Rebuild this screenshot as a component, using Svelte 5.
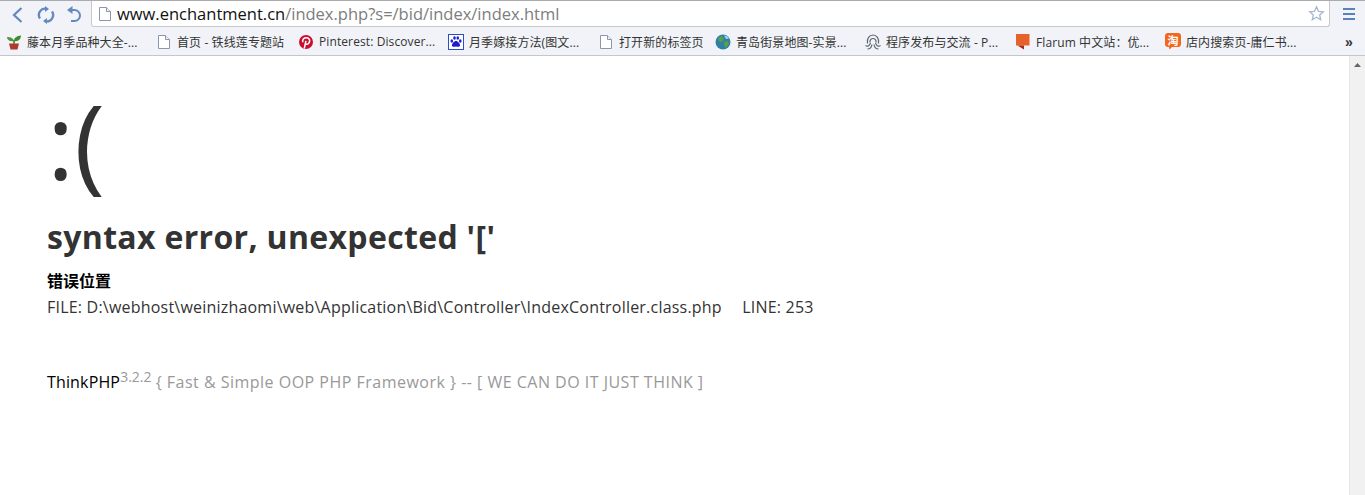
<script lang="ts">
  /**
   * Browser window showing a ThinkPHP error page.
   */
  const bookmarks = [
    { icon: 'plant', label: '藤本月季品种大全-...', width: 151 },
    { icon: 'page', label: '首页 - 铁线莲专题站', width: 141 },
    { icon: 'pinterest', label: 'Pinterest: Discover...', width: 150 },
    { icon: 'paw', label: '月季嫁接方法(图文...', width: 151 },
    { icon: 'page', label: '打开新的标签页', width: 116 },
    { icon: 'globe', label: '青岛街景地图-实景...', width: 150 },
    { icon: 'octo', label: '程序发布与交流 - P...', width: 150 },
    { icon: 'flarum', label: 'Flarum 中文站：优...', width: 150 },
    { icon: 'tao', label: '店内搜索页-庸仁书...', width: 150 }
  ];
</script>

{#snippet pageIcon()}
  <svg width="15" height="16" viewBox="1 0 15 16">
    <path d="M2.500 1.500h7l4 4v9h-11z" fill="#fff" stroke="#8a97ad" />
    <path d="M9.500 1.500v4h4" fill="#eef0f5" stroke="#8a97ad" />
  </svg>
{/snippet}

<div class="window">
  <div class="chrome">
    <div class="toolbar">
      <button class="nav back" aria-label="Back">
        <svg width="16" height="20" viewBox="0 0 16 20">
          <path d="M12.500 3 5 10l7.500 7" fill="none" stroke="#6389be" stroke-width="2.200" />
        </svg>
      </button>
      <button class="nav reload" aria-label="Reload">
        <svg width="18" height="18" viewBox="0 0 18 18">
          <path d="M3 12.500A6.300 6.300 0 0 1 9.500 2.800" fill="none" stroke="#6389be" stroke-width="2.300" />
          <path d="M15 5.500A6.300 6.300 0 0 1 8.500 15.200" fill="none" stroke="#6389be" stroke-width="2.300" />
          <path d="M8 0v6l4-3zM10 12v6l-4-3z" fill="#6389be" />
        </svg>
      </button>
      <button class="nav undo" aria-label="Undo">
        <svg width="16" height="18" viewBox="0 0 16 18">
          <path d="M4 4h4.500a5 5 0 0 1 0 11H5" fill="none" stroke="#6389be" stroke-width="2" />
          <path d="M6.500 0v8L1 4z" fill="#6389be" />
        </svg>
      </button>
      <div class="omnibox">
        <span class="page-icon">{@render pageIcon()}</span>
        <span class="url"><span class="host">www.enchantment.cn</span>/index.php?s=/bid/index/index.html</span>
        <svg class="star" width="17" height="17" viewBox="0 0 17 17">
          <path d="M8.500 1.800l2 4.500 4.800.5-3.600 3.200 1 4.800-4.200-2.500-4.200 2.500 1-4.800L1.700 6.800l4.800-.5z" fill="none" stroke="#a6b7d0" stroke-width="1.300" />
        </svg>
      </div>
      <button class="menu" aria-label="Menu">
        <span></span><span></span><span></span>
      </button>
    </div>

    <div class="bookmarks">
      {#each bookmarks as b}
        <div class="bookmark" style="width: {b.width}px">
          <span class="bm-icon">
            {#if b.icon === 'page'}
              {@render pageIcon()}
            {:else if b.icon === 'plant'}
              <svg width="16" height="16" viewBox="0 0 16 16">
                <path d="M8 10V6" stroke="#3c7a2a" stroke-width="1.500" />
                <path d="M8 7C7 3.500 4 3 1 3c0 3 3 5 7 4z" fill="#4f9a35" />
                <path d="M8 7c0-3.500 3-5 7-5.500C15 5 12 8 8 7z" fill="#3f8a2d" />
                <path d="M3 9.500h10l-1.500 6h-7z" fill="#b03a2e" />
              </svg>
            {:else if b.icon === 'pinterest'}
              <svg width="16" height="16" viewBox="0 0 16 16">
                <circle cx="8" cy="8" r="7" fill="#c8102e" />
                <path d="M6.300 14.500 7.900 6.800M5 8.200C3.800 5.500 6 3.700 8.300 3.700c2.300 0 3.500 1.500 3.300 3.400-.2 2-1.700 3.300-3 3.100-.9-.1-1.300-.7-1.400-1.200" fill="none" stroke="#fff" stroke-width="1.500" />
              </svg>
            {:else if b.icon === 'paw'}
              <svg width="16" height="16" viewBox="0 0 16 16">
                <rect x="0.500" y="0.500" width="15" height="15" fill="#fff" stroke="#2a4fc4" />
                <g fill="#1d1ad0">
                  <ellipse cx="3.800" cy="7" rx="1.300" ry="1.800" />
                  <ellipse cx="6.500" cy="4" rx="1.300" ry="1.800" />
                  <ellipse cx="9.800" cy="4" rx="1.300" ry="1.800" />
                  <ellipse cx="12.300" cy="7" rx="1.300" ry="1.800" />
                  <path d="M8 7c-2 0-4 2.500-4 4.300C4 13 6 13 8 12.400c2 .6 4 .6 4-1.100C12 9.500 10 7 8 7z" />
                </g>
              </svg>
            {:else if b.icon === 'globe'}
              <svg width="16" height="16" viewBox="0 0 16 16">
                <circle cx="8" cy="8" r="7.500" fill="#2f7fa8" />
                <path d="M4 3l3-1 2 2-1 3-3 1-2-2zM9 8l4-1 1 3-3 4-2-3z" fill="#55a04a" />
                <path d="M9 1.500c2 0 4 1 5 3l-3 .5z" fill="#a7d3e6" />
              </svg>
            {:else if b.icon === 'octo'}
              <svg width="16" height="16" viewBox="0 0 16 16" fill="none" stroke="#5c6670" stroke-width="1.200">
                <path d="M2.500 9.500C1.500 4.500 4.500 1 8 1s6.500 3.500 5.500 8.500" />
                <path d="M5 8.500C4.500 6 6.300 4.500 8 4.500S11.500 6 11 8.500" />
                <path d="M.5 11.500c2 1.500 4 .5 5-2.500M2.500 15c2.500 0 4-1.500 4.500-4.500M15.500 11.500c-2 1.500-4 .5-5-2.500M13.500 15c-2.500 0-4-1.500-4.500-4.500" />
              </svg>
            {:else if b.icon === 'flarum'}
              <svg width="16" height="16" viewBox="0 0 16 16">
                <path d="M1 0h13.500v11.500H1z" fill="#e7622a" />
                <path d="M2.500 11.500h6.500v4z" fill="#a8261c" />
              </svg>
            {:else}
              <svg width="16" height="17" viewBox="0 0 16 17">
                <path d="M3 0h10a3 3 0 0 1 3 3v8a3 3 0 0 1-3 3H7l-2.500 2.500L4 14H3a3 3 0 0 1-3-3V3a3 3 0 0 1 3-3z" fill="#f2661d" />
                <text x="8" y="11.500" text-anchor="middle" font-size="11" font-weight="bold" fill="#fff" font-family="Noto Sans CJK SC">淘</text>
              </svg>
            {/if}
          </span>
          <span class="bm-label">{b.label}</span>
        </div>
      {/each}
      <span class="more">»</span>
    </div>
  </div>

  <div class="viewport">
    <main class="error">
      <p class="face">:(</p>
      <h1>syntax error, unexpected '['</h1>
      <div class="content">
        <h3>错误位置</h3>
        <p class="line">FILE: D:\webhost\weinizhaomi\web\Application\Bid\Controller\IndexController.class.php <span class="line-no">LINE: 253</span></p>
      </div>
      <p class="copyright">
        <a href="#top">ThinkPHP</a><sup>3.2.2</sup> <span class="slogan">{'{'} Fast &amp; Simple OOP PHP Framework {'}'} -- [ WE CAN DO IT JUST THINK ]</span>
      </p>
    </main>
    <div class="scrollbar">
      <svg width="7" height="4" viewBox="0 0 7 4">
        <path d="M3.500 0 7 4H0z" fill="#666" />
      </svg>
    </div>
  </div>
</div>

<style>
  :global(body) {
    margin: 0;
    background: #fff;
  }

  .window {
    width: 1365px;
    height: 495px;
    display: flex;
    flex-direction: column;
    overflow: hidden;
    font-family: "Open Sans", "Noto Sans CJK SC", sans-serif;
  }

  .chrome {
    background: #f1f3f8;
    border-top: 1px solid #a9abaf;
    border-bottom: 1px solid #c3c6cd;
    flex: none;
  }

  .toolbar {
    height: 27px;
    display: flex;
    align-items: flex-start;
    padding-left: 8px;
  }

  .nav {
    height: 27px;
    padding: 0;
    border: none;
    background: none;
    display: flex;
    align-items: center;
    justify-content: center;
  }

  .back {
    width: 17px;
    margin-right: 10px;
  }

  .reload {
    width: 21px;
    margin-right: 9px;
  }

  .undo {
    width: 17px;
    margin-right: 9px;
  }

  .omnibox {
    width: 1239px;
    height: 26px;
    box-sizing: border-box;
    background: #fff;
    border: 1px solid #c6c8cc;
    border-top: none;
    border-radius: 0 0 3px 3px;
    display: flex;
    align-items: center;
    padding: 0 4px 0 6px;
  }

  .page-icon {
    display: flex;
    margin-right: 4px;
  }

  .url {
    flex: 1;
    font-family: "Open Sans", sans-serif;
    font-size: 16.5px;
    color: #7d7d7d;
    white-space: nowrap;
  }

  .host {
    color: #111;
  }

  .menu {
    width: 12px;
    height: 12px;
    margin: 7px 0 0 13px;
    padding: 0;
    border: none;
    background: none;
    display: flex;
    flex-direction: column;
    justify-content: space-between;
  }

  .menu span {
    display: block;
    height: 2px;
    width: 12px;
    background: #5b82b8;
  }

  .bookmarks {
    height: 27px;
    display: flex;
    align-items: center;
    padding-left: 6px;
  }

  .bookmark {
    display: flex;
    align-items: center;
    gap: 5px;
    flex: none;
    white-space: nowrap;
    overflow: hidden;
  }

  .bm-icon {
    display: flex;
    flex: none;
  }

  .bm-label {
    font-family: "Open Sans", "Noto Sans CJK SC", sans-serif;
    font-size: 12px;
    letter-spacing: 0.1px;
    color: #333;
  }

  .more {
    margin-left: 30px;
    font-family: "Liberation Sans", sans-serif;
    font-size: 14px;
    font-weight: bold;
    color: #333;
  }

  .viewport {
    flex: 1;
    display: flex;
    min-height: 0;
  }

  .error {
    flex: 1;
    padding: 24px 48px 0 47px;
    color: #333;
    font-size: 16px;
  }

  .face {
    margin: 0 0 13px;
    font-size: 104px;
    font-weight: normal;
    line-height: 120px;
  }

  h1 {
    margin: 0;
    font-size: 32px;
    font-weight: bold;
    line-height: 48px;
    letter-spacing: 0.33px;
  }

  .content {
    padding-top: 7px;
  }

  h3 {
    margin: 0;
    font-family: "Noto Sans CJK SC", sans-serif;
    font-size: 16px;
    line-height: 24px;
    color: #000;
  }

  .line {
    margin: 0;
    line-height: 30px;
    letter-spacing: 0.21px;
  }

  .line-no {
    margin-left: 16px;
  }

  .copyright {
    margin: 48px 0 0;
    color: #999;
    line-height: 24px;
  }

  .copyright a {
    color: #000;
    text-decoration: none;
    letter-spacing: 0.15px;
  }

  .slogan {
    letter-spacing: 0.49px;
  }

  sup {
    font-size: 14px;
    line-height: 0;
  }

  .scrollbar {
    width: 16px;
    flex: none;
    background: #f1f1f1;
    border-left: 1px solid #e6e6e6;
    box-sizing: border-box;
    display: flex;
    justify-content: center;
    align-items: flex-start;
    padding-top: 7px;
  }
</style>
